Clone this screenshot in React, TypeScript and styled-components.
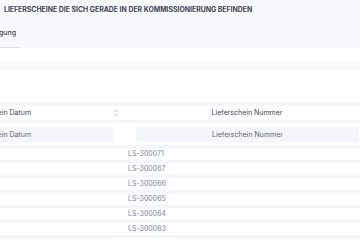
import styled, { createGlobalStyle } from "styled-components";
import { ChevronsUpDown } from "lucide-react";

const rows = ["LS-300071", "LS-300067", "LS-300066", "LS-300065", "LS-300064", "LS-300063"];

const App = () => {
  return (
    <>
      <GlobalStyle />
      <Page>
        <Header>
          <Title>Lieferscheine die sich gerade in der Kommissionierung befinden</Title>
          <TabBar>
            <Tab $active>Verfolgung</Tab>
          </TabBar>
        </Header>
        <Gap $height={14} />
        <Band />
        <Gap $height={34} />
        <TableScroll>
          <Table>
            <colgroup>
              <col style={{ width: 250 }} />
              <col style={{ width: 246 }} />
            </colgroup>
            <thead>
              <tr>
                <HeadCell>
                  <HeadInner>
                    <span />
                    <span>Lieferschein Datum</span>
                    <SortIcon>
                      <ChevronsUpDown size={8} strokeWidth={2} />
                    </SortIcon>
                  </HeadInner>
                </HeadCell>
                <HeadCell>Lieferschein Nummer</HeadCell>
              </tr>
              <tr>
                <FilterCell>
                  <FilterInput placeholder="Lieferschein Datum" />
                </FilterCell>
                <FilterCell $left={12}>
                  <FilterInput placeholder="Lieferschein Nummer" />
                </FilterCell>
              </tr>
            </thead>
            <tbody>
              {rows.map((nr) => (
                <tr key={nr}>
                  <Cell />
                  <Cell>{nr}</Cell>
                </tr>
              ))}
            </tbody>
          </Table>
        </TableScroll>
      </Page>
    </>
  );
};

const GlobalStyle = createGlobalStyle`
  html, body {
    margin: 0;
    padding: 0;
    background: #ffffff;
  }
  body {
    font-family: Inter, "Noto Sans", sans-serif;
  }
`;

const Page = styled.div`
  width: 360px;
  height: 240px;
  overflow: hidden;
  background: #ffffff;
`;

const Header = styled.div`
  height: 48px;
  background: #f8f9fc;
  display: flex;
  flex-direction: column;
  overflow: hidden;
`;

const Title = styled.h1`
  margin: 0;
  padding: 6px 0 0 4px;
  font-size: 6.9px;
  line-height: 8px;
  font-weight: 700;
  text-transform: uppercase;
  color: #3f4254;
  white-space: nowrap;
`;

const TabBar = styled.div`
  margin-top: auto;
  margin-left: -21px;
  display: flex;
`;

const Tab = styled.div<{ $active?: boolean }>`
  font-size: 7px;
  line-height: 9px;
  font-weight: 500;
  color: #3f4254;
  padding: 0 4px 10px 0;
  border-bottom: 1.5px solid ${({ $active }) => ($active ? "#dfe3ef" : "transparent")};
`;

const Gap = styled.div<{ $height: number }>`
  height: ${({ $height }) => $height}px;
`;

const Band = styled.div`
  height: 7px;
  background: #f8f9fc;
`;

const TableScroll = styled.div`
  overflow: hidden;
`;

const Table = styled.table`
  margin-left: -126px;
  width: 496px;
  table-layout: fixed;
  border-collapse: separate;
  border-spacing: 0 3px;
  background: #f5f6fa;
`;

const HeadCell = styled.th`
  height: 14px;
  padding: 0;
  background: #ffffff;
  font-size: 7px;
  line-height: 14px;
  font-weight: 400;
  color: #3f4254;
  text-align: center;
  white-space: nowrap;
`;

const HeadInner = styled.div`
  display: grid;
  grid-template-columns: 1fr auto 1fr;
  align-items: center;
`;

const SortIcon = styled.span`
  justify-self: end;
  display: flex;
  margin-right: 4px;
  color: #a1a5b7;
`;

const FilterCell = styled.td<{ $left?: number }>`
  height: 22px;
  padding: 0 11px 0 ${({ $left }) => $left ?? 11}px;
  background: #ffffff;
`;

const FilterInput = styled.input`
  display: block;
  box-sizing: border-box;
  width: 100%;
  height: 15px;
  padding: 0 4px;
  border: none;
  border-radius: 2px;
  outline: none;
  background: #f5f6fa;
  font-family: inherit;
  font-size: 7px;
  text-align: center;
  color: #3f4254;

  &::placeholder {
    color: #5e6278;
  }
`;

const Cell = styled.td`
  height: 12px;
  padding: 0 4px;
  background: #ffffff;
  font-size: 7px;
  line-height: 12px;
  color: #7e8299;
  white-space: nowrap;
`;

export default App;
